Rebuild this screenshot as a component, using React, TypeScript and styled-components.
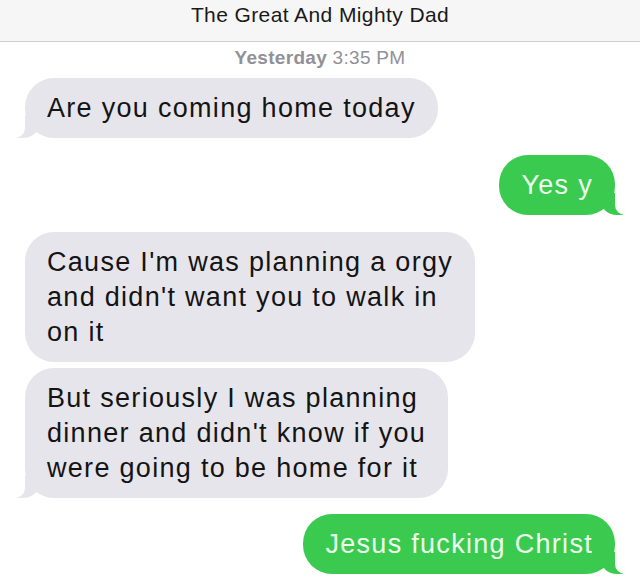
import React from 'react';
import styled, { createGlobalStyle, css } from 'styled-components';

const GRAY = '#e6e5eb';
const GREEN = '#3aca4f';

const GlobalStyle = createGlobalStyle`
    html, body {
        margin: 0;
        padding: 0;
        background: #ffffff;
    }
    body {
        font-family: "Liberation Sans", Arial, sans-serif;
    }
`;

const Screen = styled.div`
    width: 640px;
    height: 583px;
    overflow: hidden;
    background: #ffffff;
    display: flex;
    flex-direction: column;
`;

const Header = styled.div`
    height: 42px;
    box-sizing: border-box;
    padding-top: 3px;
    background: #f6f6f6;
    border-bottom: 1px solid #cfcfcf;
    text-align: center;
    font-size: 21px;
    letter-spacing: 0.4px;
    color: #1a1a1a;
`;

const Stamp = styled.div`
    margin-top: 5px;
    text-align: center;
    font-size: 19px;
    letter-spacing: 0.3px;
    color: #919196;
`;

const StampDay = styled.span`
    font-weight: 700;
`;

const Thread = styled.div`
    display: flex;
    flex-direction: column;
    padding: 0 25px;
    margin-top: 9px;
`;

const Bubble = styled.div<{ $mine?: boolean; $tail?: boolean; $gap: number }>`
    position: relative;
    align-self: ${p => (p.$mine ? 'flex-end' : 'flex-start')};
    margin-top: ${p => p.$gap}px;
    padding: 12.5px 22px 12.5px 22px;
    border-radius: 29px;
    font-size: 27px;
    line-height: 35px;
    letter-spacing: 1.3px;
    color: ${p => (p.$mine ? '#ecffee' : '#141414')};
    background: ${p => (p.$mine ? GREEN : GRAY)};

    ${p =>
        p.$tail &&
        css`
            &::before {
                content: '';
                position: absolute;
                bottom: 0;
                height: 22px;
                width: 22px;
                background: ${p.$mine ? GREEN : GRAY};
                ${p.$mine
                    ? css`
                          right: -8px;
                          border-bottom-left-radius: 16px 14px;
                      `
                    : css`
                          left: -8px;
                          border-bottom-right-radius: 16px 14px;
                      `}
            }
            &::after {
                content: '';
                position: absolute;
                bottom: 0;
                height: 22px;
                width: 26px;
                background: #ffffff;
                ${p.$mine
                    ? css`
                          right: -26px;
                          border-bottom-left-radius: 10px;
                      `
                    : css`
                          left: -26px;
                          border-bottom-right-radius: 10px;
                      `}
            }
        `}
`;

const messages = [
    { mine: false, tail: true, gap: 0, lines: ['Are you coming home today'] },
    { mine: true, tail: true, gap: 17, lines: ['Yes y'] },
    {
        mine: false,
        tail: false,
        gap: 17,
        lines: ["Cause I'm was planning a orgy", "and didn't want you to walk in", 'on it'],
    },
    {
        mine: false,
        tail: true,
        gap: 6,
        lines: ['But seriously I was planning', "dinner and didn't know if you", 'were going to be home for it'],
    },
    { mine: true, tail: true, gap: 16, lines: ['Jesus fucking Christ'] },
];

const App = () => (
    <>
        <GlobalStyle />
        <Screen>
            <Header>The Great And Mighty Dad</Header>
            <Stamp>
                <StampDay>Yesterday</StampDay> 3:35 PM
            </Stamp>
            <Thread>
                {messages.map((m, i) => (
                    <Bubble key={i} $mine={m.mine} $tail={m.tail} $gap={m.gap}>
                        {m.lines.map((l, j) => (
                            <React.Fragment key={j}>
                                {j > 0 && <br />}
                                {l}
                            </React.Fragment>
                        ))}
                    </Bubble>
                ))}
            </Thread>
        </Screen>
    </>
);

export default App;
